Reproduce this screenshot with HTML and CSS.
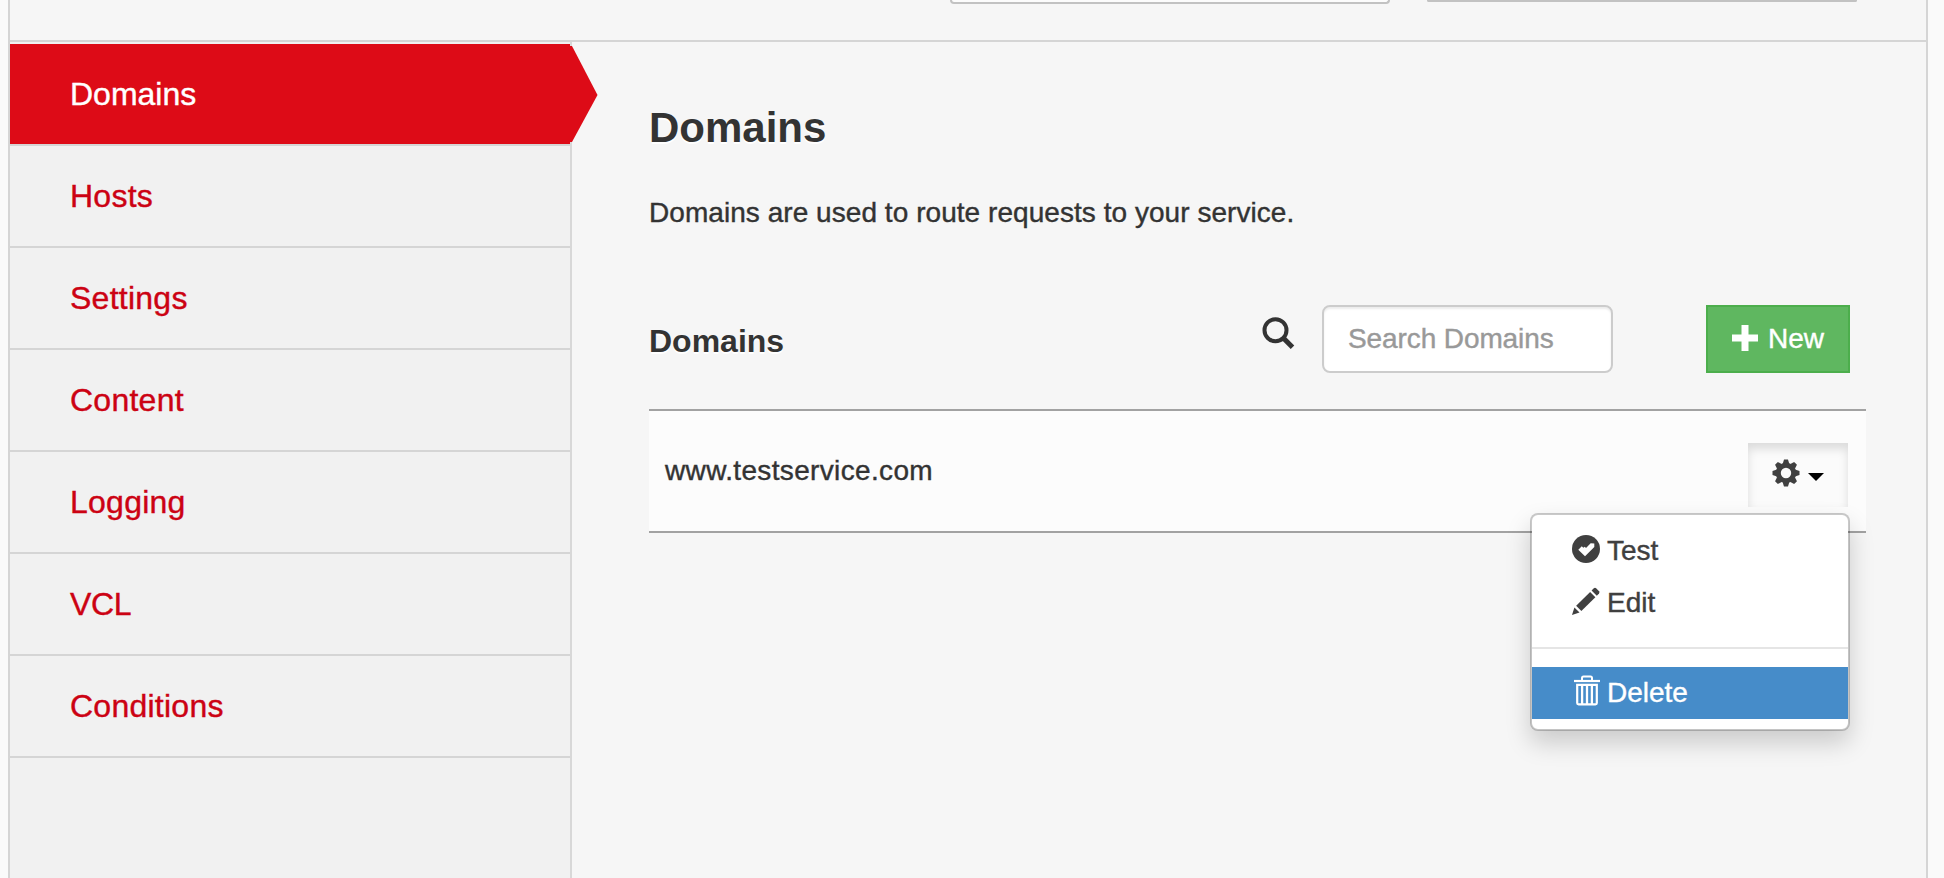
FILE: index.html
```html
<!DOCTYPE html>
<html lang="en">
<head>
<meta charset="utf-8">
<title>Domains</title>
<link rel="stylesheet" href="styles.css">
</head>
<body>
<div class="frame">
  <header class="topbar">
    <div class="field field-a"></div>
    <div class="field field-b"></div>
  </header>
  <div class="columns">
    <nav class="sidebar">
      <a class="nav-item active">Domains<svg class="arrow" width="28" height="96" viewBox="0 0 28 96"><path d="M0 0H2L27.500 49L2 96H0Z" fill="#dd0b17"/></svg></a>
      <a class="nav-item">Hosts</a>
      <a class="nav-item">Settings</a>
      <a class="nav-item">Content</a>
      <a class="nav-item">Logging</a>
      <a class="nav-item vcl">VCL</a>
      <a class="nav-item">Conditions</a>
    </nav>
    <main class="content">
      <h1>Domains</h1>
      <p class="intro">Domains are used to route requests to your service.</p>
      <div class="toolbar">
        <h2>Domains</h2>
        <svg class="search-icon" width="33" height="33" viewBox="0 0 33 33" fill="none" stroke="#333"><circle cx="13.500" cy="13.200" r="11" stroke-width="4"/><path d="M20.800 20.500L30.500 30.200" stroke-width="5"/></svg>
        <input class="search" type="text" placeholder="Search Domains">
        <button class="new-btn"><svg width="26" height="26" viewBox="0 0 26 26"><path d="M9.500 0H16.500V9.500H26V16.500H16.500V26H9.500V16.500H0V9.500H9.500Z" fill="#fff"/></svg><span>New</span></button>
      </div>
      <div class="row">
        <span class="row-name">www.testservice.com</span>
        <div class="dropdown">
          <button class="gear-btn">
            <svg class="gear" width="28" height="28" viewBox="-14 -14 28 28"><g fill="#404040"><path id="tooth" d="M-3.400 -9L-2 -13.500H2L3.400 -9Z"/><use href="#tooth" transform="rotate(45)"/><use href="#tooth" transform="rotate(90)"/><use href="#tooth" transform="rotate(135)"/><use href="#tooth" transform="rotate(180)"/><use href="#tooth" transform="rotate(225)"/><use href="#tooth" transform="rotate(270)"/><use href="#tooth" transform="rotate(315)"/></g><circle r="7.700" fill="none" stroke="#404040" stroke-width="5"/></svg>
            <svg class="caret" width="16" height="8" viewBox="0 0 16 8"><path d="M0 0H16L8 8Z"/></svg>
          </button>
          <div class="menu">
            <a class="menu-item"><svg width="28" height="28" viewBox="0 0 28 28"><circle cx="14" cy="14" r="14" fill="#404040"/><path d="M6.300 14.800L9.800 11.300L11.300 12.800L12.800 11.800L14 13L18.700 8.200L22.300 8.400V11.900L13 21.200Z" fill="#fff"/></svg>Test</a>
            <a class="menu-item"><svg width="29" height="29" viewBox="0 0 29 29" fill="#404040"><path d="M0 28.500L2.500 20.800L7.800 26Z"/><path d="M4.300 19L18.800 4.600L24.200 10L9.700 24.400Z"/><path d="M20.300 3.200L22.600 .8Q23.800 -.2 25 .8L28 3.900Q28.900 5 28 6.200L25.700 8.600Z"/></svg>Edit</a>
            <div class="divider"></div>
            <a class="menu-item selected"><svg width="28" height="31" viewBox="0 0 28 31" fill="none" stroke="#fff"><path d="M2 6H28" stroke-width="2.200"/><path d="M10 5.500V3Q10 1.500 11.500 1.500H18.500Q20 1.500 20 3V5.500" stroke-width="2"/><path d="M5.200 9.800H24.800V28Q24.800 29.300 23.400 29.300H6.600Q5.200 29.300 5.200 28Z" stroke-width="2.200"/><path d="M10.100 10V29M15 10V29M19.900 10V29" stroke-width="2.300"/></svg>Delete</a>
          </div>
        </div>
      </div>
    </main>
  </div>
</div>
</body>
</html>
```
FILE: styles.css
```css
* { box-sizing: border-box; }

body {
  margin: 0;
  height: 878px;
  overflow: hidden;
  background: #fafafa;
  color: #333;
  font: 28px/40px "Liberation Sans", Arial, sans-serif;
  -webkit-text-stroke: .4px;
}

.frame {
  display: flex;
  flex-direction: column;
  width: 1920px;
  height: 878px;
  margin-left: 8px;
  border: solid #d5d5d5;
  border-width: 0 2px;
  background: #f6f6f6;
}

.topbar {
  display: flex;
  align-items: flex-start;
  gap: 38px;
  height: 42px;
  padding-left: 940px;
  border-bottom: 2px solid #d5d5d5;
}

.field {
  border: 2px solid #c2c2c2;
  border-top: 0;
}

.field-a {
  width: 440px;
  height: 4px;
  border-radius: 0 0 6px 6px;
  background: #fcfcfc;
}

.field-b {
  width: 430px;
  height: 2px;
  margin-left: -1px;
  border-radius: 0 0 2px 2px;
}

.columns {
  display: flex;
  flex: 1;
}

.sidebar {
  width: 562px;
  padding-top: 2px;
  border-right: 2px solid #d8d8d8;
  background: #f1f1f1;
}

.nav-item {
  position: relative;
  display: flex;
  align-items: center;
  height: 102px;
  padding-left: 60px;
  border-bottom: 2px solid #d5d5d5;
  color: #cc0213;
  font-size: 32px;
  letter-spacing: .25px;
}

.nav-item.vcl {
  letter-spacing: -.4px;
}

.nav-item.active {
  background: #dd0b17;
  color: #fff;
  letter-spacing: 0;
}

.arrow {
  position: absolute;
  left: 560px;
  top: 2px;
}

.content {
  flex: 1;
  padding: 61px 60px 0 77px;
}

h1 {
  margin: 0;
  font-size: 42px;
  line-height: 50px;
  text-shadow: 0 2px 0 #fff;
  -webkit-text-stroke: 0;
}

.intro {
  margin: 40px 0 0;
  letter-spacing: .05px;
}

.toolbar {
  display: flex;
  align-items: center;
  height: 68px;
  margin-top: 72px;
  padding-right: 16px;
}

h2 {
  flex: 1;
  margin: 4px 0 0;
  font-size: 32px;
  text-shadow: 0 2px 0 #fff;
  -webkit-text-stroke: 0;
}

.search-icon {
  margin: -11px 27px 0 0;
}

.search {
  width: 291px;
  height: 68px;
  padding: 0 24px;
  border: 2px solid #ccc;
  border-radius: 8px;
  background: #fff;
  box-shadow: inset 0 2px 2px rgba(0, 0, 0, .075);
  font: inherit;
  letter-spacing: -.1px;
}

.search::placeholder {
  color: #999;
  opacity: 1;
}

.new-btn {
  display: flex;
  align-items: center;
  gap: 10px;
  width: 144px;
  height: 68px;
  margin-left: 93px;
  padding: 0 0 0 24px;
  border: 2px solid #4cae4c;
  background: #5fb760;
  color: #fff;
  font: inherit;
}

.new-btn svg {
  margin-top: -2px;
}

.row {
  display: flex;
  align-items: flex-start;
  justify-content: space-between;
  height: 124px;
  margin-top: 36px;
  padding: 32px 18px 0 16px;
  border: solid #a2a2a2;
  border-width: 2px 0;
  background: #fcfcfc;
}

.row-name {
  margin-top: 8px;
  letter-spacing: .35px;
}

.dropdown {
  position: relative;
}

.gear-btn {
  display: flex;
  align-items: flex-start;
  gap: 8px;
  width: 100px;
  height: 64px;
  padding: 16px 0 0 24px;
  border: 0;
  background: #fbfbfb;
  box-shadow: inset 0 6px 10px rgba(0, 0, 0, .125);
}

.caret {
  margin-top: 14px;
}

.menu {
  position: absolute;
  top: 70px;
  right: -2px;
  width: 320px;
  height: 218px;
  padding: 10px 0;
  border: 2px solid rgba(0, 0, 0, .2);
  border-radius: 8px;
  background: #fff;
  background-clip: padding-box;
  box-shadow: 0 12px 24px rgba(0, 0, 0, .175);
}

.menu-item {
  display: flex;
  align-items: center;
  gap: 7px;
  height: 52px;
  padding-left: 40px;
  color: #404040;
}

.menu-item svg {
  flex: none;
  width: 28px;
  margin-top: -4px;
}

.menu-item.selected {
  background: #468cc9;
  color: #fff;
}

.menu-item.selected svg {
  margin-top: -6px;
}

.divider {
  height: 2px;
  margin: 18px 0;
  background: #e5e5e5;
}
```
